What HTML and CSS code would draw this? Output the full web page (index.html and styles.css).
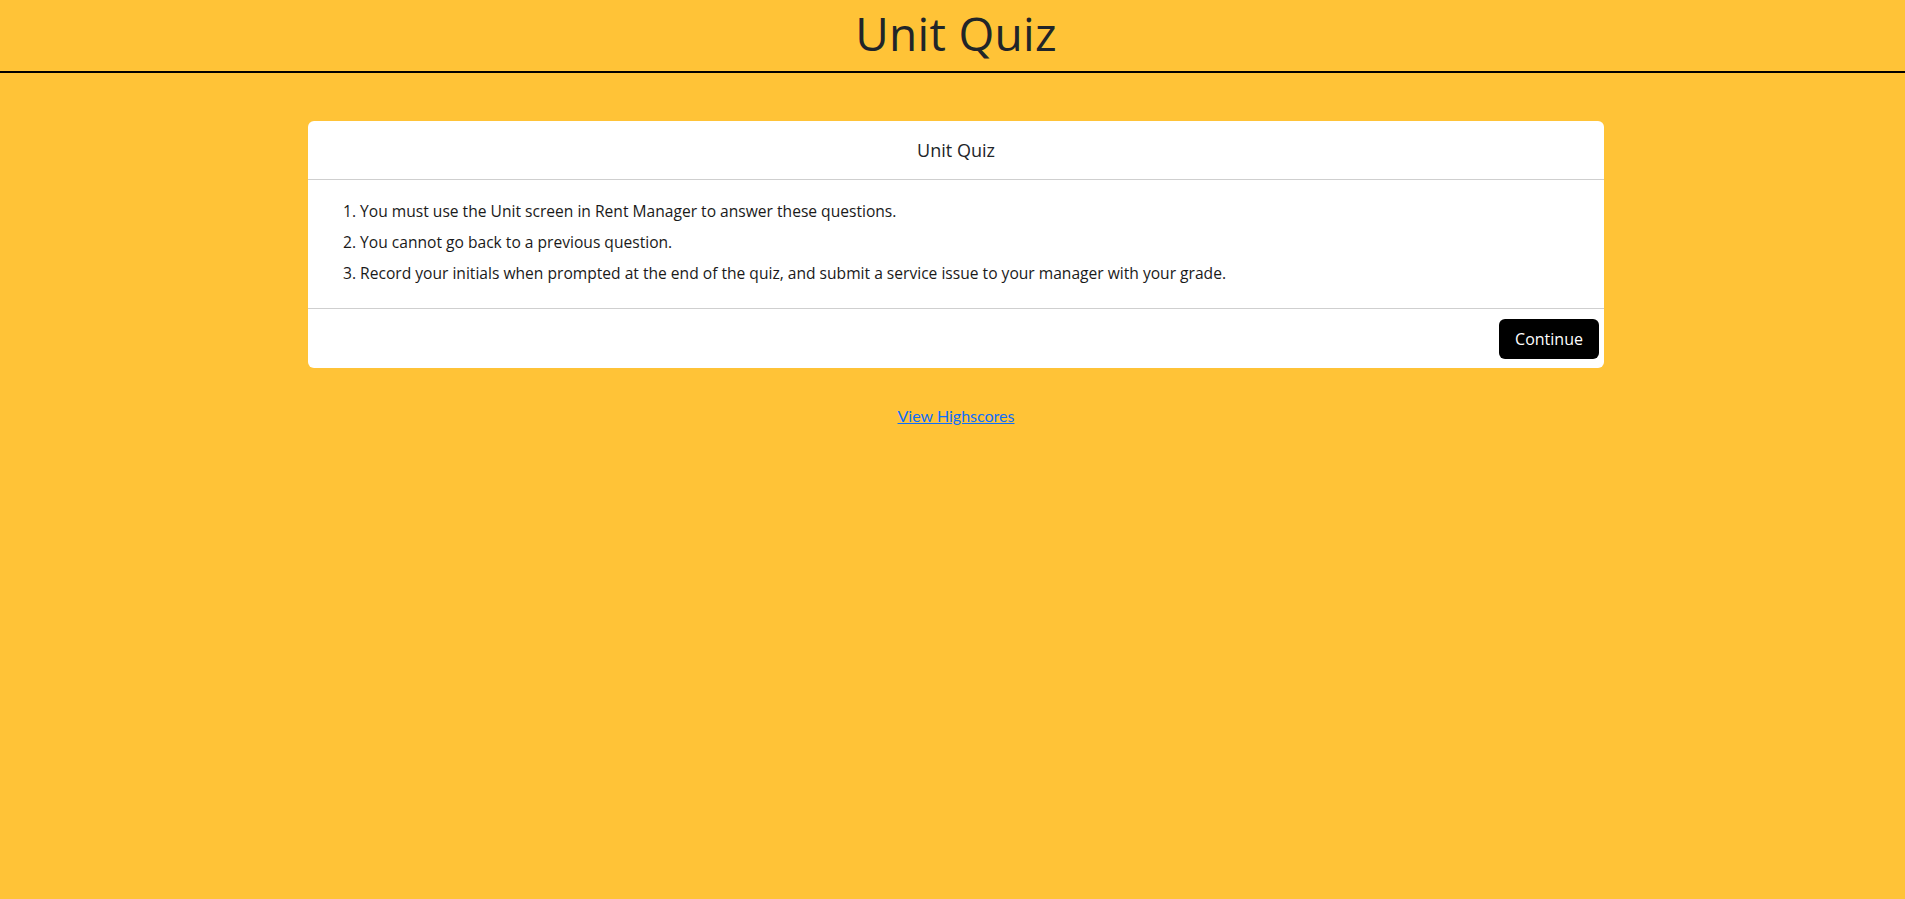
FILE: index.html
```html
<!DOCTYPE html>
<html lang="en">
<head>
<meta charset="utf-8">
<title>Unit Quiz</title>
<link rel="stylesheet" href="styles.css">
</head>
<body>
<header class="site-header">
  <h1 class="site-title">Unit Quiz</h1>
</header>
<main class="page">
  <section class="card">
    <div class="card-header">Unit Quiz</div>
    <div class="card-body">
      <p class="rule">1. You must use the Unit screen in Rent Manager to answer these questions.</p>
      <p class="rule">2. You cannot go back to a previous question.</p>
      <p class="rule">3. Record your initials when prompted at the end of the quiz, and submit a service issue to your manager with your grade.</p>
    </div>
    <div class="card-footer">
      <button class="btn">Continue</button>
    </div>
  </section>
  <div class="links">
    <a href="#" class="link">View Highscores</a>
  </div>
</main>
</body>
</html>
```

FILE: styles.css
```css
* { box-sizing: border-box; }
html, body {
  margin: 0;
  padding: 0;
  background: #ffc337;
  color: #212529;
  font-family: "Open Sans", "Liberation Sans", sans-serif;
}
.site-header {
  height: 73px;
  border-bottom: 2px solid #000;
  display: flex;
  justify-content: center;
  align-items: center;
  padding-left: 7px;
}
.site-title {
  margin: 0;
  font-weight: 400;
  font-size: 46px;
  line-height: 1;
  color: #212529;
  letter-spacing: 0.3px;
  padding-bottom: 6px;
}
.page {
  padding: 48px 0 0 7px;
}
.card {
  width: 1296px;
  margin: 0 auto;
  background: #fff;
  border-radius: 6px;
}
.card-header {
  height: 59px;
  display: flex;
  align-items: center;
  justify-content: center;
  font-size: 18px;
  border-bottom: 1px solid #cfcfcf;
  color: #212529;
}
.card-body {
  padding: 16px 35px 19px;
  border-bottom: 1px solid #cfcfcf;
}
.rule {
  margin: 0;
  font-size: 15.6px;
  line-height: 31px;
  color: #1a1a1a;
}
.card-footer {
  display: flex;
  justify-content: flex-end;
  padding: 10px 5px 9px;
}
.btn {
  width: 100px;
  height: 40px;
  background: #000;
  color: #fff;
  border: none;
  border-radius: 6px;
  font-family: "Open Sans", "Liberation Sans", sans-serif;
  font-size: 16px;
}
.links {
  text-align: center;
  padding-top: 37px;
}
.link {
  font-family: Lato, "Liberation Sans", sans-serif;
  font-size: 16px;
  color: #0d6efd;
}
```
